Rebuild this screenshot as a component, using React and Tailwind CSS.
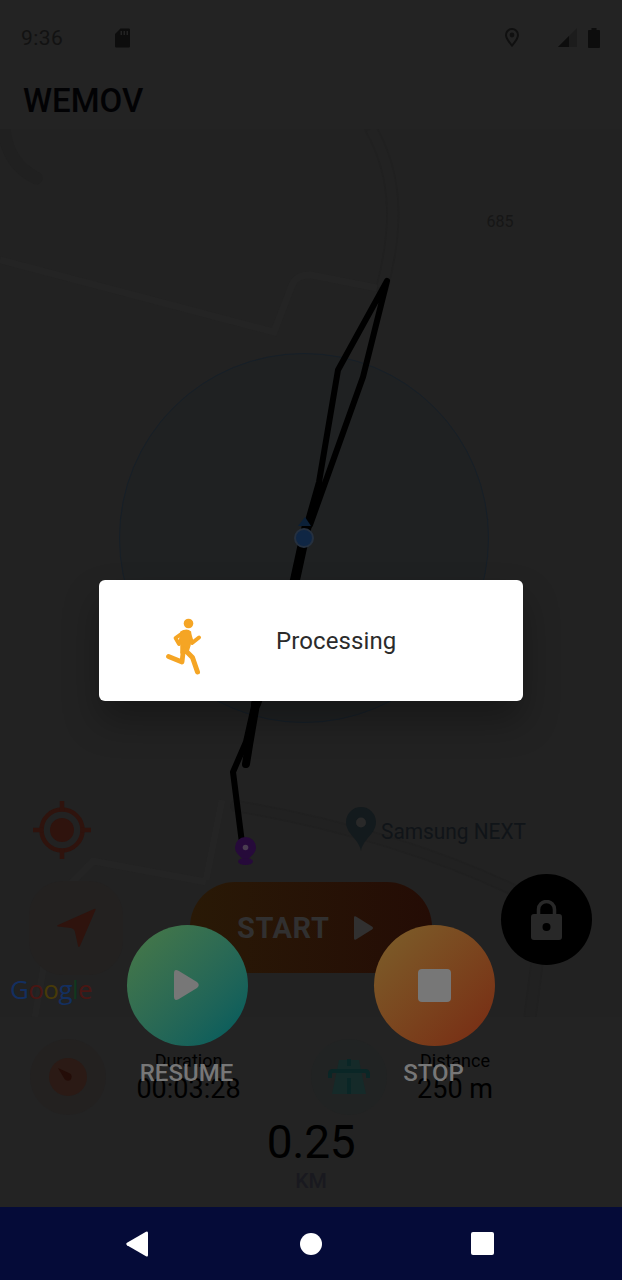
function StatusBar() {
  return (
    <header className="flex h-[75px] shrink-0 items-center px-[21px]">
      <span className="mt-[2px] w-[93px] text-[21px] leading-none tracking-[0.400px] text-[#121212]">9:36</span>
      <svg className="h-5 w-[17px]" viewBox="0 0 16 20" fill="#0d0d0d">
        <path fillRule="evenodd" d="M6 .5h8.200q1.300 0 1.300 1.300v16.400q0 1.300-1.300 1.300H1.800Q.5 19.500 .5 18.200V6zM6 3v4h1.500V3zm3 0v4h1.500V3zm3 0v4h1.500V3z" />
      </svg>
      <div className="ml-auto flex items-center">
        <svg className="mr-[38px] h-5 w-4" viewBox="0 0 16 20">
          <path d="M8 17.500C5 14 2 10.800 2 7a6 6 0 0 1 12 0C14 10.800 11 14 8 17.500z" fill="none" stroke="#101010" strokeWidth="2" />
          <circle cx="8" cy="7" r="2.400" fill="#101010" />
        </svg>
        <svg className="mr-[11px] h-5 w-[19px]" viewBox="0 0 19 20">
          <path d="M19 0v19H0z" fill="#1c1c1c" />
          <path d="M11 8v11H0z" fill="#0d0d0d" />
        </svg>
        <svg className="mr-px h-5 w-[12px]" viewBox="0 0 12 20" fill="#0d0d0d">
          <path d="M3.500 0h5v2H11q1 0 1 1v16q0 1-1 1H1q-1 0-1-1V3q0-1 1-1h2.500z" />
        </svg>
      </div>
    </header>
  );
}

function MapCanvas() {
  return (
    <svg className="absolute inset-0 h-[888px] w-[622px]" viewBox="0 129 622 888" fill="none">
      <g stroke="#202020" strokeWidth="13" strokeLinecap="round">
        <path d="M4 129C6 150 16 168 36 178" />
        <path d="M371 129C400 180 396 235 382 288" />
        <path d="M236 806C330 822 430 850 520 893" strokeWidth="12" />
        <path d="M540 940L530 1017" />
      </g>
      <g stroke="#242424" strokeWidth="7">
        <path d="M371 129C400 180 396 235 382 288" strokeWidth="10" stroke="#222222" />
        <path d="M236 806C330 822 430 850 520 893" strokeWidth="9" stroke="#212121" />
        <path d="M540 940L530 1017" strokeWidth="10" stroke="#212121" />
        <path d="M0 260L274 332L292 285Q297 274 311 275L377 288" />
        <path d="M222 800L206 880M35 1017L55 900L93 861L206 882" />
      </g>
      <circle cx="304" cy="538" r="184.500" fill="#1f2122" stroke="#161f28" />
      <g stroke="#000" strokeWidth="6" strokeLinejoin="round" strokeLinecap="round">
        <path d="M387 281L338 370L319 482L304 535M387 281L363 377L310 525" />
        <path d="M307 525L295 580L256 704" strokeWidth="10" />
        <path d="M255 702L246 742L233 772L242 843" />
        <path d="M256 704L249 745L246 764" strokeWidth="8" />
      </g>
      <path d="M298 526L305 517L311 526z" fill="#0b2038" />
      <circle cx="304" cy="538" r="9" fill="#0f2644" stroke="#25303f" strokeWidth="2" />
      <path d="M245.500 862C242 857 235 854 235 847.500a10.500 10.500 0 0 1 21 0C256 854 249 857 245.500 862z" fill="#260a3a" />
      <ellipse cx="245.500" cy="861.500" rx="7.500" ry="3.500" fill="#260a3a" />
      <circle cx="245.500" cy="847.500" r="2.800" fill="#4a3d50" />
      <path d="M361 851C359 839 346 834 346 822a15 15 0 0 1 30 0C376 834 363 839 361 851z" fill="#131a1d" />
      <circle cx="361" cy="822.500" r="5" fill="#292929" />
      <text x="486.500" y="227" fontSize="16" fill="#161616" className="font-[Roboto]">685</text>
      <text x="381" y="838.500" fontSize="22" textLength="145" lengthAdjust="spacingAndGlyphs" fill="#101418" className="font-[Roboto]">Samsung NEXT</text>
    </svg>
  );
}

function LocateIcon() {
  return (
    <svg className="h-[58px] w-[58px]" viewBox="0 0 58 58" fill="none" stroke="#2f130d" strokeWidth="4.500">
      <circle cx="29" cy="29" r="20.500" />
      <circle cx="29" cy="29" r="12" fill="#2f130d" stroke="none" />
      <path d="M29 0v10M29 48v10M0 29h10M48 29h10" />
    </svg>
  );
}

function MapControls() {
  return (
    <div className="relative flex h-full w-full flex-col">
      <div className="mt-[672px] ml-[32.500px] h-[58px]"><LocateIcon /></div>
      <div className="mt-[22px] flex h-[94px] pl-[29px]">
        <div className="flex h-[94px] w-[94px] items-center justify-center rounded-[34px] bg-[#232120]">
          <svg className="h-10 w-10" viewBox="0 0 40 40">
            <path d="M2 17L38 1Q40 0 39.500 2L24 38Q22.800 40 22 38L19 24Q18.500 21 15 20L2 18.500Q0 18 2 17z" fill="#2f130d" />
          </svg>
        </div>
        <div className="mt-px ml-[67px] flex h-[91px] w-[242px] items-center rounded-[45px] bg-linear-to-r from-[#291906] to-[#240c05] pl-[47px]">
          <span className="mt-[2px] w-[92px] text-[29px] font-bold leading-none tracking-[0.600px] text-[#313030]">START</span>
          <svg className="ml-[25px] h-6 w-5" viewBox="0 0 20 24">
            <path d="M0 1.500Q0-.5 2 .5L18 10.500Q20 12 18 13.500L2 23.500Q0 24.500 0 22.500z" fill="#313030" />
          </svg>
        </div>
        <div className="-mt-[7px] ml-[69px] flex h-[91px] w-[91px] items-center justify-center rounded-full bg-black">
          <svg className="h-10 w-[31px]" viewBox="0 0 31 40">
            <path d="M7.500 15V9.500a8 8 0 0 1 16 0V15" stroke="#282828" strokeWidth="3.500" fill="none" />
            <path fillRule="evenodd" d="M3 14h25q3 0 3 3v20q0 3-3 3H3q-3 0-3-3V17q0-3 3-3zm12.500 9a4 4 0 1 0 0 8a4 4 0 1 0 0-8z" fill="#282828" />
          </svg>
        </div>
      </div>
      <div className="-mt-px pl-[10px] font-['Open_Sans'] text-[26px] font-medium leading-[30px] tracking-[-0.600px]">
        <span className="text-[#132f60]">G</span><span className="text-[#4a1613]">o</span><span className="text-[#483a08]">o</span><span className="text-[#132f60]">g</span><span className="text-[#10381e]">l</span><span className="text-[#4a1613]">e</span>
      </div>
    </div>
  );
}

function Stats() {
  return (
    <section className="flex h-[190px] flex-col">
      <div className="flex h-[98px] items-center pt-[22px]">
        <div className="ml-[30px] flex h-[76px] w-[76px] items-center justify-center rounded-full bg-[#232120]">
          <svg className="h-[38px] w-[38px]" viewBox="0 0 38 38">
            <circle cx="19" cy="19" r="19" fill="#2b1a15" />
            <path d="M9 10L21 15.500Q24 18 21.500 22Q18 24 15.500 21z" fill="#240d08" />
          </svg>
        </div>
        <div className="mt-[2px] ml-[30px] flex w-[105px] flex-col items-center text-black">
          <span className="text-[18px] leading-[22px]">Duration</span>
          <span className="whitespace-nowrap text-[27px] leading-[34px]">00:03:28</span>
        </div>
        <div className="ml-[70px] flex h-[76px] w-[76px] items-center justify-center rounded-full bg-[#212323]">
          <svg className="h-[36px] w-[42px]" viewBox="0 0 42 36">
            <path d="M11 1h20l7 34H4z" fill="#152a29" />
            <path d="M2 19v-4q0-3 3-3h32q3 0 3 3v4" fill="none" stroke="#0a2626" strokeWidth="4" />
            <path d="M21 0v7M21 19v16" stroke="#0a2626" strokeWidth="4" />
          </svg>
        </div>
        <div className="mt-[2px] ml-[30px] flex w-[76px] flex-col items-center text-black">
          <span className="text-[18px] leading-[22px]">Distance</span>
          <span className="whitespace-nowrap text-[27px] leading-[34px]">250 m</span>
        </div>
      </div>
      <div className="flex flex-col items-center">
        <span className="mt-[2px] text-[46px] leading-[50px] tracking-[-0.300px] text-black">0.25</span>
        <span className="mt-[2px] text-[21px] font-medium leading-[24px] text-[#19191f]">KM</span>
      </div>
    </section>
  );
}

function SessionActions() {
  return (
    <div className="absolute top-[924.500px] left-[126.500px] flex w-[368.500px] justify-between text-[24px] font-medium leading-none text-[#777]">
      <div className="flex w-[121px] flex-col items-center">
        <div className="flex h-[121px] w-[121px] items-center justify-center rounded-full bg-linear-to-br from-[#437649] from-10% to-[#075d5c] to-90%">
          <svg className="mr-px h-[30px] w-[25px]" viewBox="0 0 25 30">
            <path d="M0 3.500Q0-1.500 4.500 .8L23 12Q26.500 15 23 18L4.500 29.200Q0 31.500 0 26.500z" fill="#777" />
          </svg>
        </div>
        <span className="mt-[15px] mr-px">RESUME</span>
      </div>
      <div className="flex w-[121px] flex-col items-center">
        <div className="flex h-[121px] w-[121px] items-center justify-center rounded-full bg-linear-to-br from-[#7b5a28] from-10% to-[#782f15] to-90%">
          <div className="h-[33px] w-[33px] rounded-[4px] bg-[#777]" />
        </div>
        <span className="mt-[15px] mr-[2px]">STOP</span>
      </div>
    </div>
  );
}

function ProcessingDialog() {
  return (
    <div role="dialog" className="absolute top-[580px] left-[99px] flex h-[121px] w-[424px] items-center rounded-[6px] bg-white shadow-[0_20px_36px_rgba(0,0,0,0.3)]">
      <svg className="mt-[12px] ml-[66px] h-[58px] w-[38px]" viewBox="165 618 38 58" fill="none" stroke="#f5a524" strokeLinecap="round" strokeLinejoin="round">
        <circle cx="188.500" cy="623.500" r="4.800" fill="#f5a524" stroke="none" />
        <path d="M184 632L175.500 638L179 644" strokeWidth="3.800" />
        <path d="M189 633L192 643L199 637.500" strokeWidth="4" />
        <path d="M181 632Q187 628.500 190.500 632L190 645L187.500 653L181 653L181 644L179.500 641z" fill="#f5a524" strokeWidth="1.500" />
        <path d="M183.500 649L182 662L168.500 656.500" strokeWidth="4.800" />
        <path d="M185 650L192.500 657.500L197.500 672" strokeWidth="5" />
      </svg>
      <span className="ml-[73px] text-[24px] leading-none tracking-[0.100px] text-[#2b2b2b]">Processing</span>
    </div>
  );
}

function NavigationBar() {
  return (
    <nav className="flex h-[73px] items-center bg-[#050b38] pl-[126px]">
      <svg className="h-[26px] w-[22px]" viewBox="0 0 22 26" fill="#fff">
        <path d="M20 .8Q22-.2 22 2v22q0 2.200-2 1.200L1 14.200Q-.5 13 1 11.800z" />
      </svg>
      <div className="ml-[152px] h-[22px] w-[22px] rounded-full bg-white" />
      <div className="ml-[149px] h-[23px] w-[23px] rounded-[2px] bg-white" />
    </nav>
  );
}

export default function App() {
  return (
    <main className="relative flex h-[1280px] w-[622px] flex-col overflow-hidden bg-[#232323] font-[Roboto,sans-serif]">
      <StatusBar />
      <h1 className="h-[54px] shrink-0 pt-[9px] pl-[23px] text-[33px] font-medium leading-[34px] text-[#020204]">WEMOV</h1>
      <section className="relative h-[888px] shrink-0 bg-[#222222]">
        <MapCanvas />
        <MapControls />
      </section>
      <Stats />
      <NavigationBar />
      <SessionActions />
      <ProcessingDialog />
    </main>
  );
}
